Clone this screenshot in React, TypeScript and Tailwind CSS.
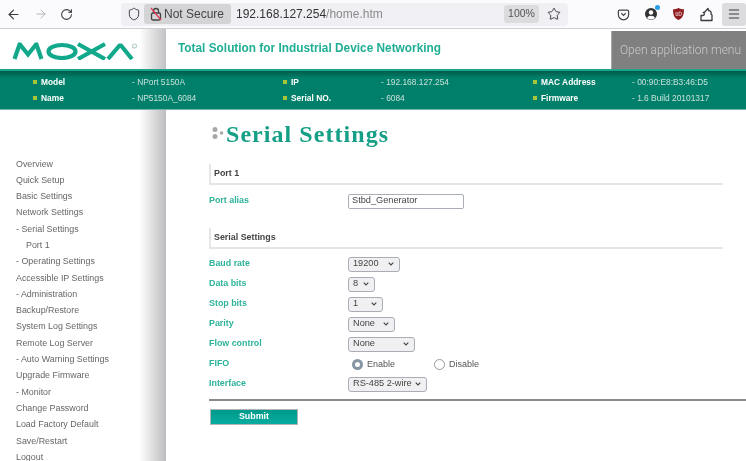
import React from "react";
import { ArrowLeft, ArrowRight, RotateCw, Shield, Star, Menu } from "lucide-react";

const menu: [string, boolean][] = [
  ["Overview", false], ["Quick Setup", false], ["Basic Settings", false], ["Network Settings", false],
  ["- Serial Settings", false], ["Port 1", true], ["- Operating Settings", false], ["Accessible IP Settings", false],
  ["- Administration", false], ["Backup/Restore", false], ["System Log Settings", false], ["Remote Log Server", false],
  ["- Auto Warning Settings", false], ["Upgrade Firmware", false], ["- Monitor", false], ["Change Password", false],
  ["Load Factory Default", false], ["Save/Restart", false], ["Logout", false],
];

function Info({ label, value, lw, vw }: { label: string; value: string; lw: string; vw: string }) {
  return (
    <div className="flex items-center">
      <span className={`flex items-center gap-[4px] font-bold text-white ${lw}`}>
        <span className="w-[4px] h-[4px] bg-[#a5c63b]" />
        {label}
      </span>
      <span className={`text-[#c9e0da] ${vw}`}>- {value}</span>
    </div>
  );
}

function Sel({ w, value }: { w: string; value: string }) {
  return (
    <div className={`${w} h-[15px] flex items-center justify-between pl-[4px] pr-[5px] rounded-[3px] border border-[#a9adb5] bg-[#f0f0f3] text-[#444] text-[9.2px] whitespace-nowrap`}>
      <span>{value}</span>
      <svg width="6" height="4" viewBox="0 0 6 4" fill="none" stroke="#444" strokeWidth="1.1" className="shrink-0"><path d="M.7.7L3 3 5.300.7" /></svg>
    </div>
  );
}

function Row({ label, children }: { label: string; children: React.ReactNode }) {
  return (
    <div className="flex items-center h-[20px]">
      <span className="w-[139px] font-bold text-[#2eb39a] text-[8.9px]">{label}</span>
      {children}
    </div>
  );
}

function Section({ title }: { title: string }) {
  return (
    <div className="h-[21px] border-l-2 border-b-2 border-[#e6e6e8] pl-[3px] mr-[23px] flex items-center font-bold text-[#444] text-[8.9px]">
      {title}
    </div>
  );
}

export default function App() {
  return (
    <div className="w-[746px] h-[461px] overflow-hidden bg-white relative font-['Liberation_Sans',sans-serif] blur-[0.4px]">
      {/* Browser toolbar */}
      <div className="h-[29px] bg-[#fbfbfd] border-b border-[#cfcfd1] flex items-center text-[#3a3a3c]">
        <div className="flex items-center w-[121px] pl-[6px]">
          <ArrowLeft size={15} strokeWidth={1.8} />
          <ArrowRight size={14} strokeWidth={1.4} className="text-[#a6a6a8] ml-[13px]" />
          <RotateCw size={13} strokeWidth={1.9} className="ml-[12px]" />
        </div>
        <div className="w-[447px] h-[23px] bg-[#f0f0f4] rounded-[4px] flex items-center pl-[6px] pr-[6px]">
          <Shield size={14} strokeWidth={1.6} />
          <div className="ml-[3px] h-[20px] w-[87px] bg-[#d4d4d6] rounded-[3px] flex items-center pl-[6px] gap-[2px] text-[12px] text-[#444] whitespace-nowrap">
            <svg width="12" height="14" viewBox="0 0 12 14" fill="none" className="shrink-0">
              <rect x="1.500" y="6" width="9" height="7" rx="1.500" stroke="#444" strokeWidth="1.300" />
              <path d="M3.500 6V4a2.500 2.500 0 0 1 5 0v2" stroke="#444" strokeWidth="1.300" />
              <path d="M1 1l10 12" stroke="#e2354f" strokeWidth="1.200" />
            </svg>
            Not Secure
          </div>
          <span className="ml-[5px] text-[12px] text-[#333]">192.168.127.254<span className="text-[#8a8a8c]">/home.htm</span></span>
          <div className="ml-auto flex items-center gap-[8px]">
            <span className="w-[35px] h-[18px] bg-[#dcdcde] rounded-[3px] flex items-center justify-center text-[10.5px] text-[#555]">100%</span>
            <Star size={14} strokeWidth={1.6} className="mr-[1px]" />
          </div>
        </div>
        <div className="flex-1 flex items-center justify-end">
          <svg width="13" height="13" viewBox="0 0 14 14" fill="none" className="mr-[14px]">
            <path d="M1.500 3.500a1.300 1.300 0 0 1 1.300-1.300h8.400a1.300 1.300 0 0 1 1.300 1.300v3.700a5.500 5.500 0 0 1-11 0z" stroke="#444" strokeWidth="1.300" />
            <path d="M4.700 5.700L7 8l2.300-2.300" stroke="#444" strokeWidth="1.300" />
          </svg>
          <div className="relative mr-[14px]">
            <svg width="14" height="14" viewBox="0 0 14 14">
              <circle cx="7" cy="7" r="6" fill="#333" />
              <circle cx="7" cy="5.500" r="2.200" fill="#fff" />
              <path d="M3 11a4.200 3.200 0 0 1 8 0a6 6 0 0 1-8 0z" fill="#fff" />
            </svg>
            <span className="absolute -top-[2px] -right-[2px] w-[5px] h-[5px] rounded-full bg-[#2a9fe8]" />
          </div>
          <svg width="13" height="14" viewBox="0 0 13 14" className="mr-[15px]">
            <path d="M6.500 1C8 2 10 2.300 12 2.300c0 5-1 9-5.500 10.700C2 11.300 1 7.300 1 2.300 3 2.300 5 2 6.500 1z" fill="#8f1d22" />
            <path d="M4 5v3.500h1.800V5M7 5v3.500h1a1.700 1.700 0 0 0 0-3.500z" fill="none" stroke="#e8c0c0" strokeWidth="0.800" />
          </svg>
          <svg width="13" height="15" viewBox="0 0 13 15" fill="none" stroke="#3a3a3c" strokeWidth="1.300" strokeLinejoin="round" className="mr-[9px]">
            <path d="M1 13.500V8.500h2.200a1.700 1.700 0 0 0 0-3.200H4.500L8 1.500l1 2.500a1.600 1.600 0 0 1 2 2v1l1 1v5.500z" />
          </svg>
          <div className="w-[24px] h-[23px] rounded-[3px] bg-[#dcdcde] flex items-center justify-center">
            <Menu size={14} strokeWidth={1.8} />
          </div>
        </div>
      </div>

      {/* Header */}
      <div className="h-[40px] flex bg-white">
        <div className="w-[166px] flex items-center pl-[12px] bg-gradient-to-r from-white from-[84%] to-[#c2c2c4]">
          <svg width="130" height="18" viewBox="0 0 130 18" fill="none" stroke="#12a88c" className="mt-[3px]">
            <path d="M2.500 17L7.500 2.500h.5L16 12.500 24 2.500h.5L29.500 17" strokeWidth="4.200" strokeLinejoin="miter" />
            <ellipse cx="50" cy="9.500" rx="13.500" ry="6.500" strokeWidth="4.200" />
            <path d="M66 2l27 15M93 2L66 17" strokeWidth="4.200" />
            <path d="M96 17L107.500 3.500h1.500L120 17" strokeWidth="4.200" />
            <circle cx="122.500" cy="4" r="2" strokeWidth="1.200" stroke="#b5cfc8" />
          </svg>
        </div>
        <div className="pl-[12px] flex items-center font-bold text-[#20ae95] text-[11.85px] pb-[1px]">
          Total Solution for Industrial Device Networking
        </div>
      </div>

      {/* Tooltip */}
      <div className="absolute left-[611px] top-[31px] w-[135px] h-[38px] bg-[#808080] border-l border-[#a9a9a9] flex items-center justify-center pl-[3px] text-[#c8c8c8] text-[12px] font-['Roboto',sans-serif] font-light whitespace-nowrap">
        Open application menu
      </div>

      {/* Info band */}
      <div className="h-[41px] border-t-2 border-b border-t-[#1ba58e] border-b-[#6fb5a6] bg-gradient-to-b from-[#005a49] from-[0%] to-[#00806a] to-[18%] flex flex-col justify-center gap-[4px] pl-[33px] text-[8.4px] leading-[12px]">
        <div className="flex">
          <Info label="Model" value="NPort 5150A" lw="w-[99px]" vw="w-[151px]" />
          <Info label="IP" value="192.168.127.254" lw="w-[98px]" vw="w-[152px]" />
          <Info label="MAC Address" value="00:90:E8:B3:46:D5" lw="w-[99px]" vw="" />
        </div>
        <div className="flex">
          <Info label="Name" value="NP5150A_6084" lw="w-[99px]" vw="w-[151px]" />
          <Info label="Serial NO." value="6084" lw="w-[98px]" vw="w-[152px]" />
          <Info label="Firmware" value="1.6 Build 20101317" lw="w-[99px]" vw="" />
        </div>
      </div>

      {/* Body */}
      <div className="flex h-[351px]">
        <nav className="w-[166px] shrink-0 pt-[45.5px] pl-[16px] bg-gradient-to-r from-white from-[84%] to-[#bdbdbf] text-[#666] text-[8.9px]">
          {menu.map(([t, sub]) => (
            <div key={t} className={`h-[16.3px] leading-[16px] ${sub ? "pl-[10px]" : ""}`}>{t}</div>
          ))}
        </nav>
        <main className="flex-1 pl-[43px] pt-[11px]">
          <div className="flex items-center h-[26px]">
            <svg width="14" height="16" viewBox="0 0 14 16" fill="#a8a8a8" className="ml-[3px]">
              <circle cx="3" cy="3.500" r="2.500" />
              <circle cx="3" cy="10.500" r="2.500" />
              <circle cx="9.500" cy="7" r="1.800" />
            </svg>
            <h1 className="font-['Liberation_Serif',serif] font-bold text-[#159f87] text-[24px] tracking-[1.05px] leading-none">Serial Settings</h1>
          </div>
          <div className="mt-[17px]"><Section title="Port 1" /></div>
          <div className="mt-[6px] mb-[17px]">
            <Row label="Port alias">
              <div className="w-[116px] h-[15px] flex items-center pl-[3px] rounded-[2px] border border-[#a9adb5] bg-white text-[#444] text-[9.2px]">Stbd_Generator</div>
            </Row>
          </div>
          <Section title="Serial Settings" />
          <div className="mt-[5px]">
            <Row label="Baud rate"><Sel w="w-[52px]" value="19200" /></Row>
            <Row label="Data bits"><Sel w="w-[27px]" value="8" /></Row>
            <Row label="Stop bits"><Sel w="w-[35px]" value="1" /></Row>
            <Row label="Parity"><Sel w="w-[47px]" value="None" /></Row>
            <Row label="Flow control"><Sel w="w-[67px]" value="None" /></Row>
            <Row label="FIFO">
              <div className="flex items-center text-[#555] text-[9px] pl-[4px] pt-[1px]">
                <span className="w-[11px] h-[11px] rounded-full border-[3px] border-[#8595a3] bg-white" />
                <span className="ml-[4px] w-[67px]">Enable</span>
                <span className="w-[11px] h-[11px] rounded-full border border-[#9a9ca3] bg-white" />
                <span className="ml-[4px]">Disable</span>
              </div>
            </Row>
            <Row label="Interface"><Sel w="w-[79px]" value="RS-485 2-wire" /></Row>
          </div>
          <div className="mt-[5px] h-[2px] bg-[#8a8a8c]" />
          <button className="mt-[8px] ml-px w-[88px] h-[16px] block bg-gradient-to-b from-[#009a8a] to-[#07aca0] border border-[#b0b5b5] text-white font-bold text-[8.9px]">Submit</button>
        </main>
      </div>
    </div>
  );
}
